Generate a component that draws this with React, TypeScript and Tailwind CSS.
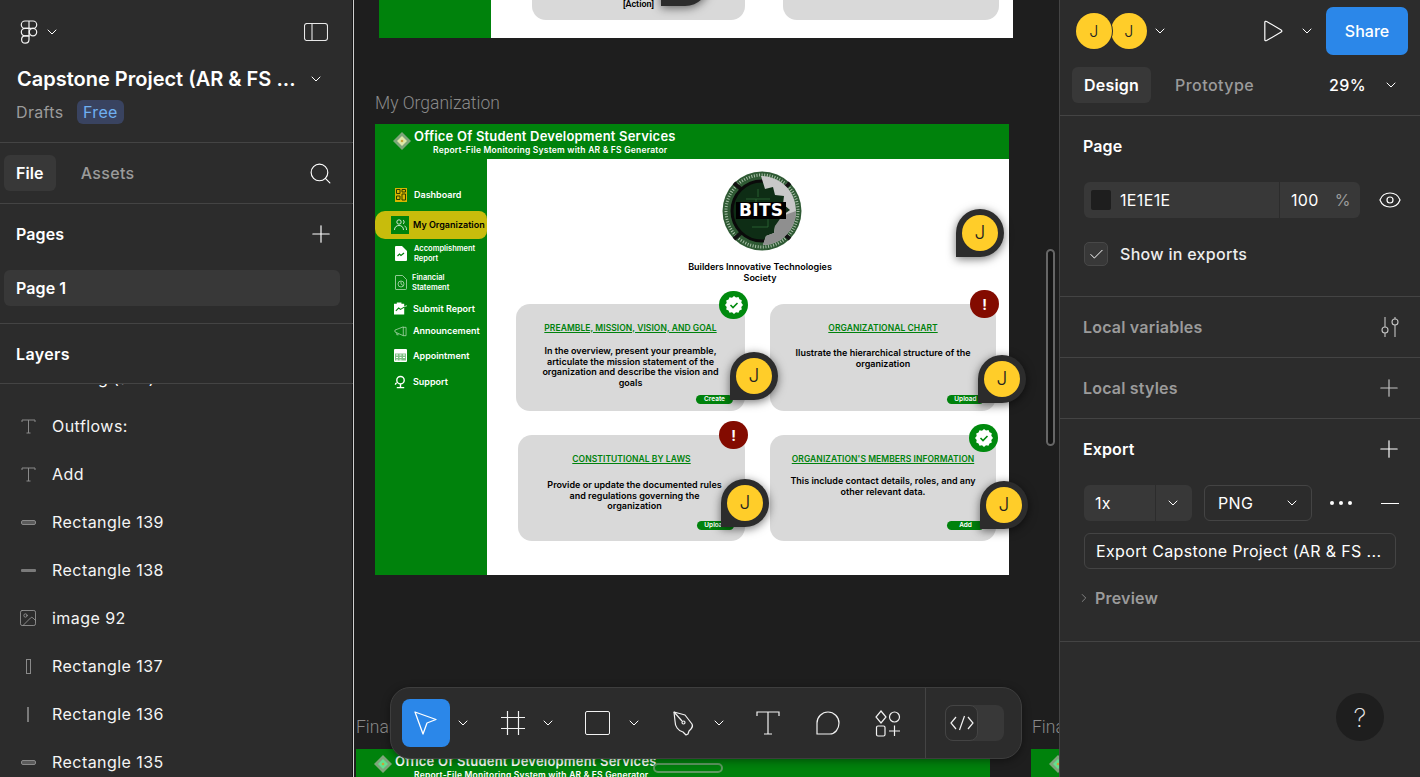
import { Check, ChevronDown, ChevronRight, Search, Plus, Eye, Image as ImageIcon } from "lucide-react"

const FONT = "font-['Inter','Noto_Sans',sans-serif]"

const LAYERS = [
  { icon: "text", name: "Outflows:" },
  { icon: "text", name: "Add" },
  { icon: "hrect", name: "Rectangle 139" },
  { icon: "hline", name: "Rectangle 138" },
  { icon: "image", name: "image 92" },
  { icon: "vrect", name: "Rectangle 137" },
  { icon: "vline", name: "Rectangle 136" },
  { icon: "hrect", name: "Rectangle 135" },
]

const CARDS = [
  {
    pos: "left-[141px] top-[180px] h-[107px] w-[229px]",
    title: "PREAMBLE, MISSION, VISION, AND GOAL",
    body: "In the overview, present your preamble, articulate the mission statement of the organization and describe the vision and goals",
    action: "Create",
    pad: "pt-[12px]",
    btn: "bottom-[7px] right-[12px]",
  },
  {
    pos: "left-[395px] top-[180px] h-[107px] w-[226px]",
    title: "ORGANIZATIONAL CHART",
    body: "Ilustrate the hierarchical structure of the organization",
    action: "Upload",
    pad: "pt-[14px]",
    btn: "bottom-[7px] right-[12px]",
  },
  {
    pos: "left-[143px] top-[311px] h-[106px] w-[227px]",
    title: "CONSTITUTIONAL BY LAWS",
    body: "Provide or update the documented rules and regulations governing the organization",
    action: "Upload",
    pad: "pt-[15px] pl-[6px]",
    btn: "bottom-[11px] right-[11px]",
  },
  {
    pos: "left-[395px] top-[311px] h-[106px] w-[226px]",
    title: "ORGANIZATION'S MEMBERS INFORMATION",
    body: "This include contact details, roles, and any other relevant data.",
    action: "Add",
    pad: "pt-[11px]",
    btn: "bottom-[11px] right-[12px]",
  },
]

const NAV = [
  { icon: "dash", label: "Dashboard", pos: "top-[29px] gap-[7px]" },
  { icon: "acc", label: "Accomplishment Report", pos: "top-[85px] gap-[7px]", small: true },
  { icon: "fin", label: "Financial Statement", pos: "top-[114px] gap-[5px]", small: true },
  { icon: "sub", label: "Submit Report", pos: "top-[143px] gap-[6px]" },
  { icon: "ann", label: "Announcement", pos: "top-[166px] gap-[6px]" },
  { icon: "app", label: "Appointment", pos: "top-[190px] gap-[6px]" },
  { icon: "sup", label: "Support", pos: "top-[216px] gap-[6px]" },
]

function LayerIcon({ type }: { type: string }) {
  if (type === "text")
    return (
      <svg width="15" height="15" viewBox="0 0 15 15" fill="none" stroke="#8a8a8a" strokeWidth="1">
        <path d="M1 3V1h13v2M7.500 1v13M5.500 14h4" />
      </svg>
    )
  if (type === "image") return <ImageIcon size={20} strokeWidth={1} color="#9a9a9a" />
  if (type === "hrect") return <div className="h-[5px] w-[15px] rounded-[2px] border border-[#8a8a8a] bg-[#5a5a5a]" />
  if (type === "hline") return <div className="h-[3px] w-[15px] rounded-[1px] bg-[#7a7a7a]" />
  if (type === "vrect") return <div className="h-[15px] w-[5px] border border-[#8a8a8a]" />
  return <div className="h-[15px] w-[2px] bg-[#7a7a7a]" />
}

function FigmaLogo() {
  return (
    <svg width="18" height="24" viewBox="0 0 18 24" fill="none" stroke="#f2f2f2" strokeWidth="1.200">
      <path d="M9 1H5a3.700 3.700 0 0 0 0 7.400h4zM9 1h4a3.700 3.700 0 0 1 0 7.400H9z" />
      <path d="M9 8.400H5a3.700 3.700 0 0 0 0 7.400h4z" />
      <circle cx="13" cy="12.100" r="3.700" />
      <path d="M9 15.800H5a3.700 3.700 0 1 0 4 3.700z" />
    </svg>
  )
}

function Avatar({ extra }: { extra?: string }) {
  return (
    <div className={`flex h-9 w-9 items-center justify-center rounded-full bg-[#ffcd29] font-light text-[#222] ${extra ?? "text-[19px]"}`}>
      J
    </div>
  )
}

// cursor pin laid over the mock frame
function Pin({ pos }: { pos: string }) {
  return (
    <div className={`absolute ${pos} flex h-[48px] w-[48px] items-center justify-center rounded-full rounded-bl-none bg-[#2c2c2c] shadow-[0_2px_10px_rgba(0,0,0,0.55)]`}>
      <Avatar />
    </div>
  )
}

function NavIcon({ type }: { type: string }) {
  switch (type) {
    case "dash":
      return (
        <svg width="12" height="14" viewBox="0 0 12 14">
          <rect width="12" height="14" fill="#d9b600" />
          <path d="M1.500 1.500h3.500v4H1.500zM7 1.500h3.500v2.500H7zM1.500 8h3.500v3.500H1.500zM7 6h3.500v6H7z" fill="none" stroke="#2c3d00" strokeWidth="1" />
        </svg>
      )
    case "acc":
      return (
        <svg width="12" height="15" viewBox="0 0 12 15">
          <path d="M1 0h6l5 5v9a1 1 0 0 1-1 1H1a1 1 0 0 1-1-1V1a1 1 0 0 1 1-1z" fill="#fff" />
          <path d="M2.500 10l2-2 1.500 1.500 3-2.500" fill="none" stroke="#00820c" strokeWidth="1.200" />
        </svg>
      )
    case "fin":
      return (
        <svg width="12" height="15" viewBox="0 0 12 15" fill="none" stroke="#cfe8cf" strokeWidth="0.700">
          <path d="M1 .5h6.500l4 4v9a1 1 0 0 1-1 1H1a.5.5 0 0 1-.5-.5V1a.5.5 0 0 1 .5-.5z" />
          <circle cx="6" cy="9" r="3" />
          <path d="M6 9V6.500M6 9l2 1.500" />
        </svg>
      )
    case "sub":
      return (
        <svg width="14" height="13" viewBox="0 0 14 13">
          <path d="M0 1.500h3V0h5v1.500h3V13H0z" fill="#fff" />
          <path d="M2 9l3-3 2 1.500 5-3" fill="none" stroke="#00820c" strokeWidth="1.100" />
          <path d="M11 4.500l3-1" stroke="#fff" strokeWidth="0.800" />
        </svg>
      )
    case "ann":
      return (
        <svg width="14" height="11" viewBox="0 0 14 11" fill="none" stroke="#cfe8cf" strokeWidth="0.700">
          <path d="M10 .5L1 4v2l9 4zM10 1h3v9h-3M3 7v2h2" />
        </svg>
      )
    case "app":
      return (
        <svg width="13" height="13" viewBox="0 0 13 13">
          <rect width="13" height="13" rx="1" fill="#fff" />
          <path d="M1 4.500h11v7H1z" fill="#00820c" opacity="0.500" />
          <path d="M1 2.500h11M2 6h2M5.500 6h2M9 6h2M2 8.500h2M5.500 8.500h2M9 8.500h2M2 11h2M5.500 11h2" stroke="#fff" strokeWidth="1" />
        </svg>
      )
    default:
      return (
        <svg width="14" height="14" viewBox="0 0 14 14" fill="none" stroke="#fff" strokeWidth="1.500">
          <circle cx="7" cy="5" r="4" />
          <path d="M3 13h8M7 9v4M3 8c-1 0-1.500 1-1.500 2" />
        </svg>
      )
  }
}

function Diamond({ inner, pos }: { inner: string; pos: string }) {
  return (
    <svg className={`absolute ${pos}`} width="18" height="18" viewBox="0 0 18 18">
      <path d="M9 0l9 9-9 9-9-9z" fill="#7ea67a" />
      <path d="M9 4l5 5-5 5-5-5z" fill={inner} />
      <circle cx="9" cy="9" r="1.300" fill="#c9a23a" />
    </svg>
  )
}

function StatusOk({ pos }: { pos: string }) {
  return (
    <div className={`absolute ${pos} flex h-[28px] w-[29px] items-center justify-center rounded-full bg-[#008a0e]`}>
      <svg width="20" height="20" viewBox="0 0 20 20">
        <path d="M10 1l2 1.500 2.500-.5 1 2.300 2.300 1-.5 2.500L19 10l-1.700 2 .5 2.500-2.300 1-1 2.300-2.500-.5L10 19l-2-1.700-2.500.5-1-2.300-2.300-1 .5-2.500L1 10l1.700-2-.5-2.500 2.300-1 1-2.300 2.500.5z" fill="#fff" />
        <path d="M6.500 10l2.500 2.500 4.500-4.500" fill="none" stroke="#008a0e" strokeWidth="1.600" />
      </svg>
    </div>
  )
}

function StatusWarn({ pos }: { pos: string }) {
  return (
    <div className={`absolute ${pos} flex h-[28px] w-[29px] items-center justify-center rounded-full bg-[#830b00] text-[14px] font-bold text-white`}>
      !
    </div>
  )
}

function BitsLogo() {
  return (
    <div className="relative h-[80px] w-[80px]">
      <svg width="80" height="80" viewBox="0 0 80 80">
        <circle cx="40" cy="40" r="39.500" fill="#2f5a34" />
        <circle cx="40" cy="40" r="36" fill="none" stroke="#a9c0a9" strokeWidth="3" strokeDasharray="1 1.600" />
        <path d="M12 12l7 6M68 12l-7 6M12 68l7-6M68 68l-7-6" stroke="#111" strokeWidth="4" />
        <circle cx="40" cy="40" r="30" fill="#0e2d15" stroke="#0a0a0a" strokeWidth="3" />
        <path d="M20 40h14v-12h14M30 56h16v-9M24 28h10M36 18v8" fill="none" stroke="#2f6b38" strokeWidth="0.800" />
        <path d="M39 5c18 0 35 14 35 35 0 8-3 17-9 23l-4 4c-5 4-12 7-20 7l3-9 8-3 1-7 9-3-1-8 7-5-7-6 1-8-9-1-2-8-8 2z" fill="#c8c8c8" />
        <path d="M60 45l14-5c0 8-3 17-9 23l-4 4c-5 4-12 7-20 7l3-9 8-3 1-7z" fill="#8f8f8f" />
      </svg>
      <div className="absolute left-[14px] top-[31px] bg-black px-[3px] text-[17px] leading-[17px] font-extrabold tracking-[0.300px] text-white font-['DejaVu_Sans',sans-serif]">
        BITS
      </div>
    </div>
  )
}

export default function App() {
  return (
    <div className={`flex h-[777px] w-[1420px] overflow-hidden bg-[#1e1e1e] ${FONT}`}>
      {/* Left panel */}
      <aside className="relative z-20 flex h-full w-[354px] shrink-0 flex-col border-r border-[#d0d0d0] bg-[#2c2c2c] tracking-[0.350px] text-white shadow-[inset_-1px_0_0_#151515]">
        <div className="h-[143px] shrink-0 border-b border-[#444]">
          <div className="flex h-[63px] items-center justify-between pl-[20px] pr-[25px]">
            <div className="flex items-center gap-[6px]">
              <FigmaLogo />
              <ChevronDown size={16} strokeWidth={1.500} />
            </div>
            <svg width="24" height="18" viewBox="0 0 24 18" fill="none" stroke="#e8e8e8" strokeWidth="1.100">
              <rect x=".5" y=".5" width="23" height="17" rx="2.500" />
              <path d="M8 1v16" />
            </svg>
          </div>
          <div className="flex items-center justify-between pl-[17px] pr-[29px]">
            <span className="text-[20px] leading-[32px] font-semibold tracking-normal">Capstone Project (AR &amp; FS ...</span>
            <ChevronDown size={16} strokeWidth={1.500} />
          </div>
          <div className="mt-[5px] flex items-center gap-[13px] pl-[16px]">
            <span className="w-[48px] text-[16px] leading-[24px] text-[#9b9b9b]">Drafts</span>
            <span className="rounded-[6px] bg-[#394360] px-[6px] text-[16px] leading-[24px] text-[#6fb0f2]">Free</span>
          </div>
        </div>
        <div className="flex h-[61px] shrink-0 items-center border-b border-[#444] pl-[4px] pr-[20px]">
          <span className="rounded-[6px] bg-[#383838] px-[12px] text-[16px] leading-[36px] font-semibold tracking-[0.100px]">File</span>
          <span className="ml-[25px] text-[16px] font-medium text-[#9b9b9b]">Assets</span>
          <Search size={25} strokeWidth={1.100} className="ml-auto" />
        </div>
        <div className="h-[120px] shrink-0 border-b border-[#444]">
          <div className="flex h-[60px] items-center justify-between pl-[16px] pr-[18px]">
            <span className="text-[16px] font-semibold tracking-[0.100px]">Pages</span>
            <Plus size={28} strokeWidth={1} />
          </div>
          <div className="ml-[4px] mr-[13px] mt-[6px] flex h-[36px] items-center rounded-[6px] bg-[#383838] pl-[12px] text-[16px] font-semibold tracking-[0.100px]">Page 1</div>
        </div>
        <div className="flex h-[60px] shrink-0 items-center border-b border-[#444] pl-[16px] text-[16px] font-semibold">Layers</div>
        <div className="flex flex-col overflow-hidden">
          <div className="-mt-[30px] flex h-[48px] shrink-0 items-center pl-[52px] text-[16px]">Writing (add)</div>
          {LAYERS.map((layer) => (
            <div key={layer.name} className="flex h-[48px] shrink-0 items-center">
              <div className="flex w-[52px] shrink-0 items-center justify-center pl-[4px]">
                <LayerIcon type={layer.icon} />
              </div>
              <span className="text-[16px] leading-[24px] tracking-[0.450px] text-[#f5f5f5]">{layer.name}</span>
            </div>
          ))}
        </div>
      </aside>

      {/* Canvas */}
      <main className="relative h-full w-[705px] shrink-0 overflow-hidden font-['Inter',sans-serif]">
        {/* previous frame, scrolled off the top */}
        <div className="absolute left-[25px] top-[-40px] h-[78px] w-[634px] bg-white">
          <div className="h-full w-[112px] bg-[#00820c]" />
          <div className="absolute left-[153px] top-0 flex h-[60px] w-[213px] items-end justify-center rounded-b-[14px] bg-[#d9d9d9] pb-[11px] text-[9px] leading-[10px] font-semibold text-black font-['Roboto',sans-serif]">
            [Action]
          </div>
          <div className="absolute left-[404px] top-0 h-[60px] w-[216px] rounded-b-[14px] bg-[#d9d9d9]" />
          <Pin pos="left-[282px] top-[-2px]" />
        </div>

        <div className="absolute left-[21px] top-[93px] text-[17.500px] leading-[20px] font-light text-[#8a8a8a] font-['Roboto',sans-serif]">My Organization</div>

        {/* My Organization frame */}
        <div className="absolute left-[21px] top-[124px] h-[451px] w-[634px] bg-white">
          <div className="relative h-[35px] bg-[#00820c] text-white">
            <Diamond inner="#dfe8a8" pos="left-[18px] top-[8px]" />
            <div className="flex flex-col pl-[39px] pt-[4px]">
              <span className="text-[13px] leading-[17px] font-semibold tracking-[0.200px]">Office Of Student Development Services</span>
              <span className="ml-[19px] text-[8.500px] leading-[11px] font-semibold tracking-[0.220px]">Report-File Monitoring System with AR &amp; FS Generator</span>
            </div>
          </div>
          <div className="absolute bottom-0 left-0 top-[35px] w-[112px] bg-[#00820c]">
            {NAV.map((n) => (
              <div key={n.label} className={`absolute left-[19px] ${n.pos} flex items-center`}>
                <div className="flex w-[13px] justify-center"><NavIcon type={n.icon} /></div>
                <span className={n.small ? "w-[70px] text-[7.500px] leading-[9.500px] font-semibold text-white" : "text-[9px] leading-[12px] font-semibold text-white"}>{n.label}</span>
              </div>
            ))}
            <div className="absolute left-0 top-[52px] flex h-[28px] w-[112px] items-center rounded-l-[10px] rounded-r-[8px] bg-[#c8bc0c] pl-[16px]">
              <div className="flex h-[18px] w-[18px] items-center justify-center bg-[#00820c]">
                <svg width="13" height="12" viewBox="0 0 13 12" fill="none" stroke="#fff" strokeWidth="0.800">
                  <circle cx="5" cy="3" r="2.200" />
                  <path d="M.5 11c0-3 2-4.500 4.500-4.500S9.500 8 9.500 11M9 1c1.500.5 1.500 3.500 0 4M10.500 7c1.500.5 2 2 2 4" />
                </svg>
              </div>
              <span className="ml-[4px] whitespace-nowrap text-[9px] font-semibold text-black">My Organization</span>
            </div>
          </div>

          <div className="absolute left-[347px] top-[47px]"><BitsLogo /></div>
          <div className="absolute left-[310px] top-[138px] w-[150px] text-center text-[9px] leading-[10.500px] font-semibold text-black">
            Builders Innovative Technologies Society
          </div>

          {CARDS.map((c) => (
            <div key={c.title} className={`absolute ${c.pos} rounded-[14px] bg-[#d9d9d9] text-center text-black`}>
              <div className="pt-[19px] text-[8.500px] leading-[11px] font-semibold tracking-[0.060px] whitespace-nowrap text-[#00820c] underline">{c.title}</div>
              <div className={`${c.pad} mx-auto w-[186px] text-[9px] leading-[10.600px] font-semibold`}>{c.body}</div>
              <div className={`absolute ${c.btn} flex h-[9px] w-[37px] items-center justify-center rounded-full bg-[#00820c] text-[6.500px] font-semibold text-white`}>{c.action}</div>
            </div>
          ))}

          <StatusOk pos="left-[344px] top-[167px]" />
          <StatusWarn pos="left-[595px] top-[166px]" />
          <StatusWarn pos="left-[344px] top-[297px]" />
          <StatusOk pos="left-[594px] top-[300px]" />

          <Pin pos="left-[581px] top-[85px]" />
          <Pin pos="left-[355px] top-[228px]" />
          <Pin pos="left-[603px] top-[231px]" />
          <Pin pos="left-[346px] top-[355px]" />
          <Pin pos="left-[605px] top-[357px]" />
        </div>

        {/* next frames peek in at the bottom */}
        <div className="absolute left-[2px] top-[717px] text-[17.500px] leading-[20px] font-light text-[#8a8a8a] font-['Roboto',sans-serif]">Financial Statement</div>
        <div className="absolute left-[2px] top-[749px] h-[40px] w-[634px] bg-[#00820c] text-white">
          <Diamond inner="#63e08e" pos="left-[18px] top-[6px]" />
          <div className="absolute left-[39px] top-[4px] text-[13px] leading-[17px] font-semibold tracking-[0.200px]">Office Of Student Development Services</div>
          <div className="absolute left-[58px] top-[21px] text-[8.500px] leading-[11px] font-semibold tracking-[0.220px]">Report-File Monitoring System with AR &amp; FS Generator</div>
        </div>
        <div className="absolute left-[678px] top-[717px] text-[17.500px] leading-[20px] font-light text-[#8a8a8a] font-['Roboto',sans-serif]">Final</div>
        <div className="absolute left-[677px] top-[749px] h-[40px] w-[40px] bg-[#00820c]">
          <Diamond inner="#63e08e" pos="left-[18px] top-[6px]" />
        </div>

        {/* scrollbars */}
        <div className="absolute left-[692px] top-[249px] h-[197px] w-[9px] rounded-full border-2 border-[#666] bg-[#141414]" />
        <div className="absolute left-[299px] top-[763px] h-[10px] w-[70px] rounded-full border-2 border-[#5f9a62]" />

        {/* Toolbar */}
        <div className="absolute left-[36px] top-[687px] flex h-[72px] w-[632px] items-center rounded-[20px] border border-[#3e3e3e] bg-[#2c2c2c] pl-[11px] shadow-[0_2px_8px_rgba(0,0,0,0.4)]">
          <div className="flex h-[48px] w-[48px] shrink-0 items-center justify-center rounded-[8px] bg-[#2b87e9]">
            <svg width="28" height="30" viewBox="0 0 28 30" fill="none" stroke="#fff" strokeWidth="1.300" strokeLinejoin="round">
              <path d="M3 4l21 7.500-9 3.500-4 11z" />
            </svg>
          </div>
          <ChevronDown size={16} strokeWidth={1.500} color="#fff" className="ml-[5px] shrink-0" />
          <svg className="ml-[29px] shrink-0" width="26" height="26" viewBox="0 0 26 26" fill="none" stroke="#f2f2f2" strokeWidth="1.200">
            <path d="M7.500 1v24M18.500 1v24M1 7.500h24M1 18.500h24" />
          </svg>
          <ChevronDown size={16} strokeWidth={1.500} color="#fff" className="ml-[14px] shrink-0" />
          <div className="ml-[29px] h-[24px] w-[25px] shrink-0 rounded-[2px] border-[1.200px] border-[#f2f2f2]" />
          <ChevronDown size={16} strokeWidth={1.500} color="#fff" className="ml-[16px] shrink-0" />
          <svg className="ml-[30px] shrink-0" width="26" height="26" viewBox="0 0 26 26" fill="none" stroke="#f2f2f2" strokeWidth="1.200" strokeLinejoin="round">
            <path d="M2 2l11 3 7 9c1 2 1 3-1 5l-2 2-1 3-2 1-3-3C6 21 3 16 3 11z" />
            <path d="M2 2l8 9" />
            <circle cx="11.500" cy="12.500" r="1.500" />
          </svg>
          <ChevronDown size={16} strokeWidth={1.500} color="#fff" className="ml-[13px] shrink-0" />
          <svg className="ml-[28px] shrink-0" width="26" height="26" viewBox="0 0 26 26" fill="none" stroke="#f2f2f2" strokeWidth="1.200">
            <path d="M2 6V2h22v4M13 2v22M9 24h8" />
          </svg>
          <svg className="ml-[34px] shrink-0" width="26" height="26" viewBox="0 0 26 26" fill="none" stroke="#f2f2f2" strokeWidth="1.200">
            <path d="M2 24V13C2 7 7 2 13 2s11 5 11 11c0 6-4 11-9 11z" />
          </svg>
          <svg className="ml-[33px] shrink-0" width="28" height="28" viewBox="0 0 28 28" fill="none" stroke="#f2f2f2" strokeWidth="1.200">
            <path d="M7 2l5 6-5 6-5-6z" />
            <circle cx="20.500" cy="8" r="5" />
            <rect x="2.500" y="17" width="8.500" height="10" rx="1.500" />
            <path d="M15 22h11M20.500 16.500V27" />
          </svg>
          <div className="ml-[23px] h-full w-px shrink-0 bg-[#444]" />
          <div className="ml-[19px] flex h-[36px] w-[59px] shrink-0 rounded-[8px] bg-[#383838]">
            <div className="flex h-[36px] w-[33px] items-center justify-center rounded-[8px] border border-[#444] bg-[#2c2c2c]">
              <svg width="24" height="16" viewBox="0 0 24 16" fill="none" stroke="#f2f2f2" strokeWidth="1.200">
                <path d="M6 2L1 8l5 6M18 2l5 6-5 6M14.500 1L9.500 15" />
              </svg>
            </div>
          </div>
        </div>
      </main>

      {/* Right panel */}
      <aside className="relative z-20 flex h-full w-[361px] shrink-0 flex-col border-l border-[#444] bg-[#2c2c2c] tracking-[0.350px] text-white">
        <div className="flex h-[62px] items-center pl-[16px]">
          <Avatar extra="relative z-10 text-[16px] ring-1 ring-[#2c2c2c]" />
          <Avatar extra="-ml-[1px] text-[16px]" />
          <ChevronDown size={16} strokeWidth={1.500} className="ml-[5px]" />
          <svg className="ml-[95px]" width="20" height="24" viewBox="0 0 22 24" fill="none" stroke="#fff" strokeWidth="1.300" strokeLinejoin="round">
            <path d="M2 2.500c0-1 1-1.500 2-1L20 10.800c1 .6 1 1.800 0 2.400L4 22.500c-1 .5-2 0-2-1z" />
          </svg>
          <ChevronDown size={16} strokeWidth={1.500} className="ml-[16px]" />
          <div className="ml-[11px] flex h-[48px] w-[82px] items-center justify-center rounded-[7px] bg-[#2b87e9] text-[16px] font-medium tracking-normal">Share</div>
        </div>
        <div className="flex h-[54px] items-start border-b border-[#444] pl-[12px] pr-[21px] pt-[5px]">
          <span className="rounded-[6px] bg-[#383838] px-[12px] text-[16px] leading-[36px] font-semibold tracking-[0.200px]">Design</span>
          <span className="ml-[24px] text-[16px] leading-[36px] font-medium tracking-[0.450px] text-[#9b9b9b]">Prototype</span>
          <span className="ml-auto text-[16px] leading-[36px] font-medium">29%</span>
          <ChevronDown size={16} strokeWidth={1.500} className="ml-[17px] mt-[10px]" />
        </div>
        <div className="h-[181px] shrink-0 border-b border-[#444] pl-[24px] pr-[18px]">
          <div className="-ml-[1px] flex h-[60px] items-center text-[16px] font-semibold tracking-[0.100px]">Page</div>
          <div className="mt-[6px] flex items-center justify-between">
            <div className="flex h-[36px] w-[276px] items-center rounded-[6px] bg-[#383838]">
              <div className="ml-[7px] h-[20px] w-[20px] rounded-[2px] bg-[#1e1e1e]" />
              <span className="ml-[9px] w-[159px] text-[16px]">1E1E1E</span>
              <div className="h-full w-px bg-[#2c2c2c]" />
              <span className="ml-[11px] text-[16px]">100</span>
              <span className="ml-[16px] text-[16px] text-[#9b9b9b]">%</span>
            </div>
            <Eye size={24} strokeWidth={1.200} />
          </div>
          <div className="mt-[24px] flex items-center gap-[12px]">
            <div className="flex h-[24px] w-[24px] items-center justify-center rounded-[5px] border border-[#484848] bg-[#383838]">
              <Check size={17} strokeWidth={1.400} />
            </div>
            <span className="text-[16px] font-medium tracking-[0.300px] text-[#eeeeee]">Show in exports</span>
          </div>
        </div>
        <div className="flex h-[61px] shrink-0 items-center justify-between border-b border-[#444] pl-[23px] pr-[20px]">
          <span className="text-[16px] font-semibold tracking-[0.200px] text-[#9b9b9b]">Local variables</span>
          <svg width="20" height="22" viewBox="0 0 20 22" fill="none" stroke="#c4c4c4" strokeWidth="1.100">
            <circle cx="5" cy="14" r="3" />
            <circle cx="15" cy="6" r="3" />
            <path d="M5 1v10M5 17v4M15 1v2M15 9v12" />
          </svg>
        </div>
        <div className="flex h-[61px] shrink-0 items-center justify-between border-b border-[#444] pl-[23px] pr-[17px]">
          <span className="text-[16px] font-semibold tracking-[0.200px] text-[#9b9b9b]">Local styles</span>
          <Plus size={28} strokeWidth={1} color="#c4c4c4" />
        </div>
        <div className="h-[223px] shrink-0 border-b border-[#444] pl-[24px] pr-[21px]">
          <div className="-ml-[1px] -mr-[4px] flex h-[60px] items-center justify-between">
            <span className="text-[16px] font-semibold tracking-[0.100px]">Export</span>
            <Plus size={28} strokeWidth={1} />
          </div>
          <div className="mt-[6px] flex items-center">
            <div className="flex h-[36px] w-[108px] items-center rounded-[6px] bg-[#383838]">
              <span className="w-[71px] pl-[11px] text-[16px]">1x</span>
              <div className="h-full w-px bg-[#2c2c2c]" />
              <ChevronDown size={16} strokeWidth={1.500} className="ml-[9px]" />
            </div>
            <div className="ml-[12px] flex h-[36px] w-[108px] items-center rounded-[6px] border border-[#444] pl-[13px] text-[16px]">
              PNG
              <ChevronDown size={16} strokeWidth={1.500} className="ml-auto mr-[11px]" />
            </div>
            <div className="ml-[18px] flex gap-[5px]">
              <div className="h-[4px] w-[4px] rounded-full bg-white" />
              <div className="h-[4px] w-[4px] rounded-full bg-white" />
              <div className="h-[4px] w-[4px] rounded-full bg-white" />
            </div>
            <div className="ml-auto h-px w-[18px] bg-white" />
          </div>
          <div className="mt-[12px] flex h-[36px] w-[312px] items-center rounded-[6px] border border-[#444] pl-[11px] text-[16px]">
            Export Capstone Project (AR &amp; FS ...
          </div>
          <div className="mt-[17px] flex h-[24px] items-center text-[16px] font-semibold tracking-[0.200px] text-[#9b9b9b]">
            <ChevronRight size={14} strokeWidth={1.300} className="-ml-[7px] mr-[4px]" />
            Preview
          </div>
        </div>
        <div className="absolute bottom-[36px] right-[36px] flex h-[48px] w-[48px] items-center justify-center rounded-full bg-[#1e1e1e] text-[26px] font-extralight text-[#e8e8e8]">?</div>
      </aside>
    </div>
  )
}
